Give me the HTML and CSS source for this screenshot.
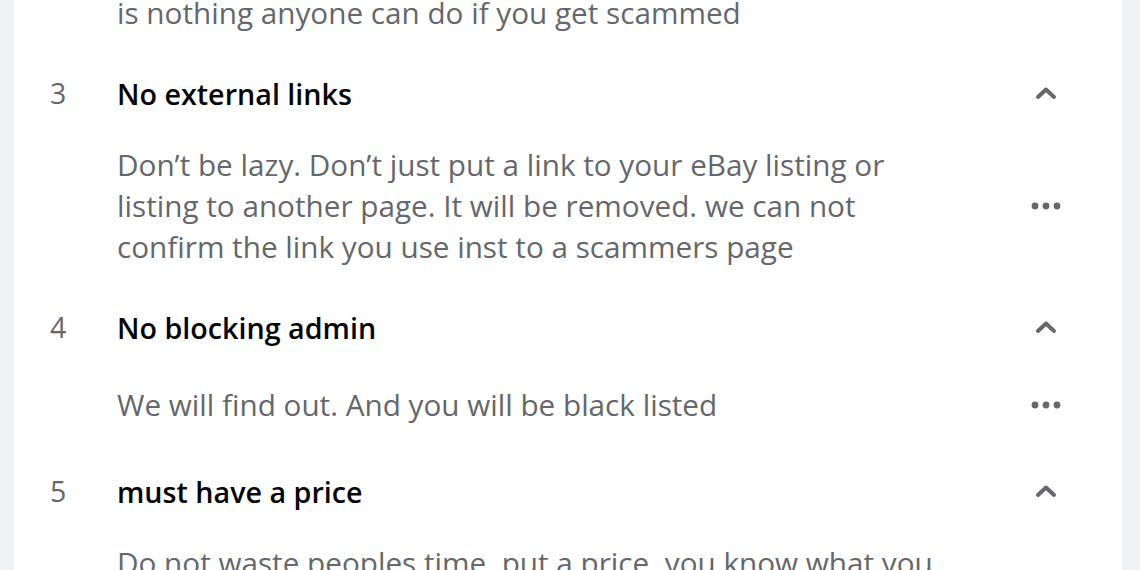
FILE: index.html
```html
<!DOCTYPE html>
<html lang="en">
<head>
    <meta charset="UTF-8">
    <meta name="viewport" content="width=device-width, initial-scale=1.0">
    <title>Group rules</title>
    <link rel="stylesheet" href="styles.css">
</head>
<body>
    <main class="rules-card">
        <div class="rule rule-tail">
            <div class="rule-desc">
                <p>is nothing anyone can do if you get scammed</p>
            </div>
        </div>

        <div class="rule">
            <div class="rule-head">
                <span class="rule-num">3</span>
                <h2 class="rule-title">No external links</h2>
                <button class="icon-btn" aria-label="Collapse">
                    <svg width="22" height="14" viewBox="0 0 22 14"><path d="M3 11 L11 3.5 L19 11" fill="none" stroke="currentColor" stroke-width="4" stroke-linecap="round" stroke-linejoin="round"/></svg>
                </button>
            </div>
            <div class="rule-desc">
                <p>Don’t be lazy. Don’t just put a link to your eBay listing or listing to another page. It will be removed. we can not confirm the link you use inst to a scammers page</p>
                <button class="icon-btn" aria-label="More">
                    <svg width="30" height="8" viewBox="0 0 30 8"><circle cx="4" cy="4" r="3.4" fill="currentColor"/><circle cx="15" cy="4" r="3.4" fill="currentColor"/><circle cx="26" cy="4" r="3.4" fill="currentColor"/></svg>
                </button>
            </div>
        </div>

        <div class="rule">
            <div class="rule-head">
                <span class="rule-num">4</span>
                <h2 class="rule-title">No blocking admin</h2>
                <button class="icon-btn" aria-label="Collapse">
                    <svg width="22" height="14" viewBox="0 0 22 14"><path d="M3 11 L11 3.5 L19 11" fill="none" stroke="currentColor" stroke-width="4" stroke-linecap="round" stroke-linejoin="round"/></svg>
                </button>
            </div>
            <div class="rule-desc">
                <p>We will find out. And you will be black listed</p>
                <button class="icon-btn" aria-label="More">
                    <svg width="30" height="8" viewBox="0 0 30 8"><circle cx="4" cy="4" r="3.4" fill="currentColor"/><circle cx="15" cy="4" r="3.4" fill="currentColor"/><circle cx="26" cy="4" r="3.4" fill="currentColor"/></svg>
                </button>
            </div>
        </div>

        <div class="rule">
            <div class="rule-head">
                <span class="rule-num">5</span>
                <h2 class="rule-title">must have a price</h2>
                <button class="icon-btn" aria-label="Collapse">
                    <svg width="22" height="14" viewBox="0 0 22 14"><path d="M3 11 L11 3.5 L19 11" fill="none" stroke="currentColor" stroke-width="4" stroke-linecap="round" stroke-linejoin="round"/></svg>
                </button>
            </div>
            <div class="rule-desc">
                <p>Do not waste peoples time. put a price. you know what you want for it</p>
                <button class="icon-btn" aria-label="More">
                    <svg width="30" height="8" viewBox="0 0 30 8"><circle cx="4" cy="4" r="3.4" fill="currentColor"/><circle cx="15" cy="4" r="3.4" fill="currentColor"/><circle cx="26" cy="4" r="3.4" fill="currentColor"/></svg>
                </button>
            </div>
        </div>
    </main>
</body>
</html>
```

FILE: styles.css
```css
/* group rules list */

body {
    font-family: "Open Sans", "Noto Sans", sans-serif;
    background-color: #f0f2f5;
    margin: 0;
    padding: 0 18px 0 14px;
    overflow: hidden;
}

.rules-card {
    background-color: #fff;
    margin-top: -8px;
    padding: 0 52px 0 36px;
    min-height: 700px;
}

.rule {
    padding-top: 20px;
    padding-bottom: 20px;
}

.rule-tail {
    padding-top: 0;
}

.rule-head {
    display: flex;
    align-items: center;
    height: 40px;
    margin-bottom: 31px;
}

.rule-num {
    width: 67px;
    flex-shrink: 0;
    font-size: 28.5px;
    color: #65676b;
}

.rule-title {
    flex: 1;
    margin: 0;
    font-size: 28.7px;
    font-weight: 600;
    color: #050505;
}

.rule-desc {
    display: flex;
    align-items: center;
    min-height: 53px;
    padding-left: 67px;
}

.rule-desc p {
    flex: 1;
    margin: 0;
    max-width: 830px;
    font-size: 29.7px;
    line-height: 41px;
    color: #65676b;
}

.rule-tail .rule-desc {
    min-height: 0;
}

.icon-btn {
    display: flex;
    align-items: center;
    justify-content: center;
    width: 48px;
    height: 48px;
    margin-left: auto;
    padding: 0;
    border: none;
    background: none;
    color: #65676b;
    cursor: pointer;
}
```
